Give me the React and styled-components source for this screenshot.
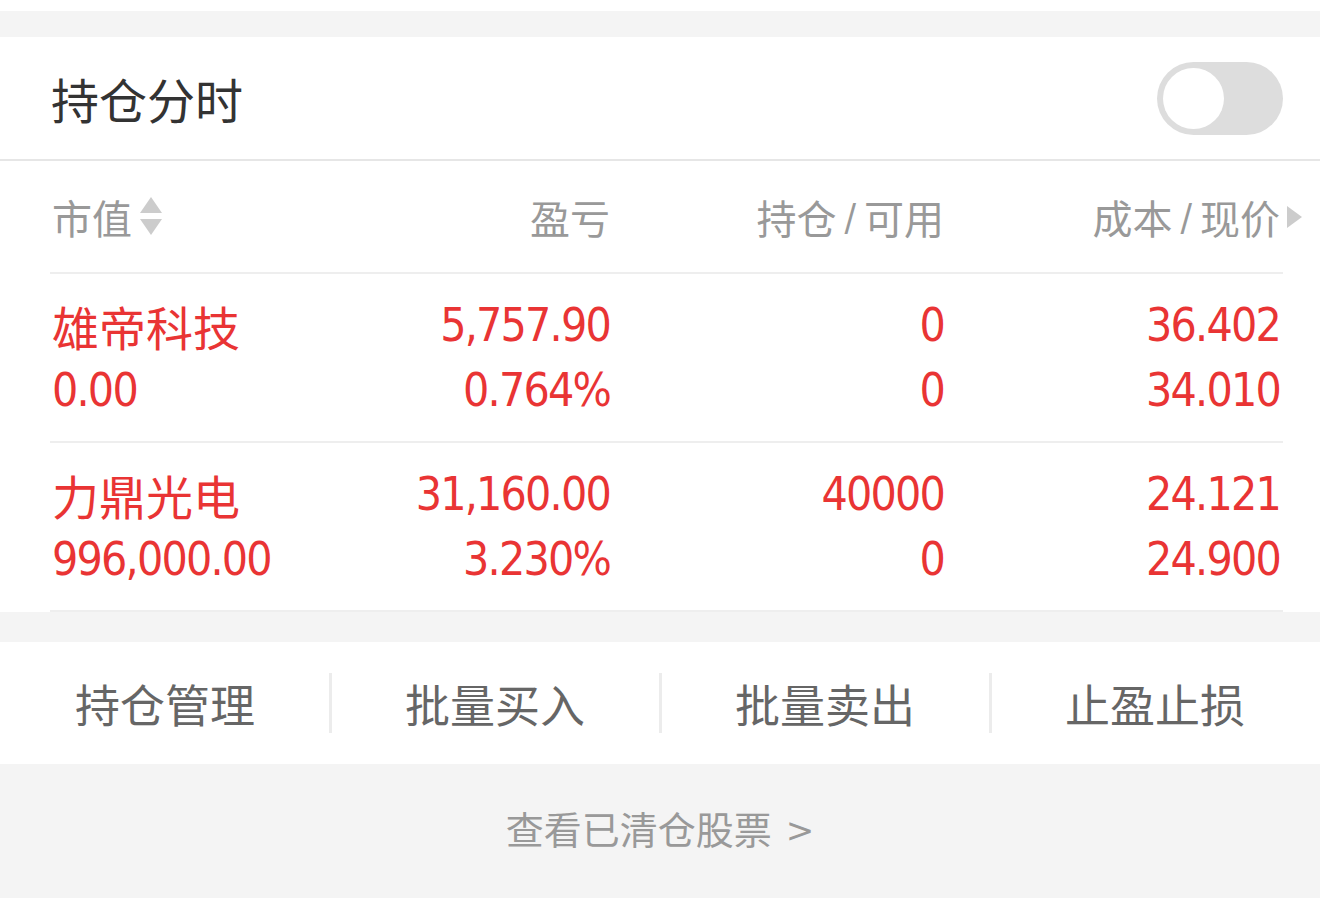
import styled, { createGlobalStyle } from "styled-components";

const GlobalStyle = createGlobalStyle`
  body {
    margin: 0;
    background: #f4f4f4;
    font-family: "Noto Sans CJK SC", "Noto Sans", sans-serif;
  }
`;

const RED = "#e93434";
const NUM_FONT = `"DejaVu Sans", "Noto Sans CJK SC", sans-serif`;

const Page = styled.div`
  width: 1320px;
  height: 898px;
  background: #f4f4f4;
  display: flex;
  flex-direction: column;
  overflow: hidden;
`;

const TopStrip = styled.div`
  height: 11px;
  background: #fff;
  margin-bottom: 26px;
`;

const Panel = styled.section`
  background: #fff;
`;

const Header = styled.div`
  height: 122px;
  display: flex;
  align-items: center;
  justify-content: space-between;
  padding: 0 37px 0 51px;
  border-bottom: 2px solid #e6e6e6;
`;

const Title = styled.div`
  font-size: 48px;
  color: #333;
`;

const Switch = styled.div`
  width: 126px;
  height: 73px;
  border-radius: 37px;
  background: #dddddd;
  padding: 6px;
  box-sizing: border-box;
  display: flex;
  align-items: center;
`;

const Knob = styled.div`
  width: 61px;
  height: 61px;
  border-radius: 50%;
  background: #fff;
`;

const Table = styled.div`
  padding: 0 37px 0 50px;
`;

const Grid = styled.div`
  display: grid;
  grid-template-columns: minmax(0, 1fr) 334px 334px 336px;
  padding-right: 3px;
`;

const HeadRow = styled(Grid)`
  height: 111px;
  align-items: center;
  border-bottom: 2px solid #eeeeee;
`;

const HeadCell = styled.div`
  display: flex;
  align-items: center;
  justify-content: ${(p) => (p.left ? "flex-start" : "flex-end")};
  font-size: 40px;
  color: #999;
  padding-left: ${(p) => (p.left ? "2px" : "0")};
`;

const Slash = styled.span`
  font-family: "DejaVu Sans", sans-serif;
  font-stretch: condensed;
  font-size: 38px;
  margin: 0 8px;
  color: #999;
`;

const SortIcon = styled.svg`
  margin-left: 8px;
`;

const MoreIcon = styled.svg`
  margin-left: 7px;
  margin-right: -22px;
`;

const DataRow = styled(Grid)`
  height: 167px;
  align-items: center;
  border-bottom: 2px solid #eeeeee;
`;

const Cell = styled.div`
  display: flex;
  flex-direction: column;
  align-items: ${(p) => (p.left ? "flex-start" : "flex-end")};
  padding-left: ${(p) => (p.left ? "2px" : "0")};
  color: ${RED};
`;

const Line = styled.div`
  height: 65px;
  line-height: 65px;
  font-size: ${(p) => (p.cjk ? "47px" : "46px")};
  letter-spacing: ${(p) => (p.cjk ? "0" : "-1.8px")};
  font-family: ${(p) => (p.cjk ? `"Noto Sans CJK SC", sans-serif` : NUM_FONT)};
  font-stretch: condensed;
  white-space: nowrap;
`;

const Actions = styled.div`
  margin-top: 30px;
  height: 122px;
  background: #fff;
  display: grid;
  grid-template-columns: repeat(4, 1fr);
`;

const ActionBtn = styled.div`
  position: relative;
  display: flex;
  align-items: center;
  justify-content: center;
  font-size: 45px;
  color: #666;
  &:not(:first-child)::before {
    content: "";
    position: absolute;
    left: -1px;
    top: 31px;
    width: 3px;
    height: 60px;
    background: #ececec;
  }
`;

const Footer = styled.div`
  flex: 1;
  text-align: center;
  padding-top: 38px;
  font-size: 38px;
  line-height: 52px;
  color: #999;
`;

const Chevron = styled.span`
  margin-left: 14px;
  font-family: "DejaVu Sans", sans-serif;
  font-size: 34px;
  vertical-align: 2px;
`;

const rows = [
  { name: "雄帝科技", value: "0.00", pl: "5,757.90", rate: "0.764%", hold: "0", avail: "0", cost: "36.402", price: "34.010" },
  { name: "力鼎光电", value: "996,000.00", pl: "31,160.00", rate: "3.230%", hold: "40000", avail: "0", cost: "24.121", price: "24.900" },
];

function App() {
  return (
    <Page>
      <GlobalStyle />
      <TopStrip />
      <Panel>
        <Header>
          <Title>持仓分时</Title>
          <Switch>
            <Knob />
          </Switch>
        </Header>
        <Table>
          <HeadRow>
            <HeadCell left>
              市值
              <SortIcon width="22" height="40" viewBox="0 0 22 40">
                <polygon points="11,0 22,16 0,16" fill="#cccccc" />
                <polygon points="0,22 22,22 11,38" fill="#cccccc" />
              </SortIcon>
            </HeadCell>
            <HeadCell>盈亏</HeadCell>
            <HeadCell>
              持仓<Slash>/</Slash>可用
            </HeadCell>
            <HeadCell>
              成本<Slash>/</Slash>现价
              <MoreIcon width="15" height="22" viewBox="0 0 15 22">
                <polygon points="0,0 15,11 0,22" fill="#cccccc" />
              </MoreIcon>
            </HeadCell>
          </HeadRow>
          {rows.map((r) => (
            <DataRow key={r.name}>
              <Cell left>
                <Line cjk>{r.name}</Line>
                <Line>{r.value}</Line>
              </Cell>
              <Cell>
                <Line>{r.pl}</Line>
                <Line>{r.rate}</Line>
              </Cell>
              <Cell>
                <Line>{r.hold}</Line>
                <Line>{r.avail}</Line>
              </Cell>
              <Cell>
                <Line>{r.cost}</Line>
                <Line>{r.price}</Line>
              </Cell>
            </DataRow>
          ))}
        </Table>
      </Panel>
      <Actions>
        <ActionBtn>持仓管理</ActionBtn>
        <ActionBtn>批量买入</ActionBtn>
        <ActionBtn>批量卖出</ActionBtn>
        <ActionBtn>止盈止损</ActionBtn>
      </Actions>
      <Footer>
        查看已清仓股票<Chevron>&gt;</Chevron>
      </Footer>
    </Page>
  );
}

export default App;
